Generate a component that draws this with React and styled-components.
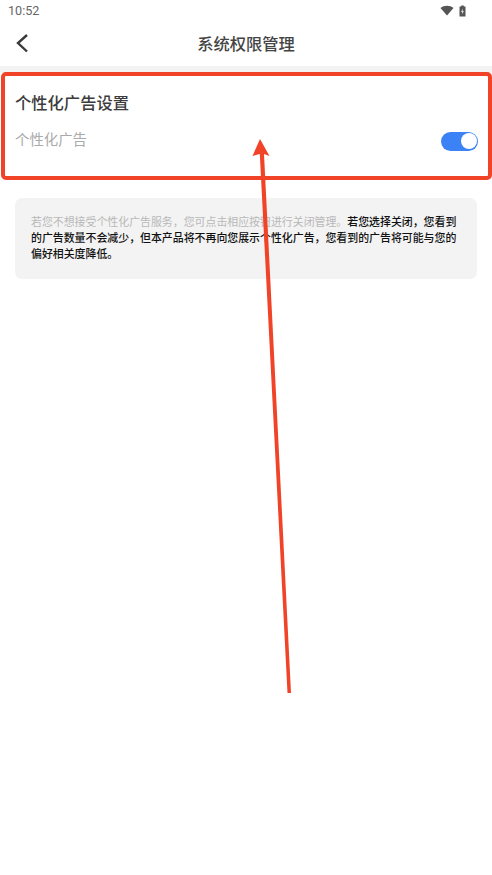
import React from 'react';
import styled, { createGlobalStyle } from 'styled-components';

const GlobalStyle = createGlobalStyle`
    html, body {
        margin: 0;
        padding: 0;
        background: #fff;
        font-family: "Roboto", "Noto Sans CJK SC", sans-serif;
    }
`

const Page = styled.div`
    position: relative;
    width: 492px;
    height: 875px;
    overflow: hidden;
    background: #fff;
`

const StatusBar = styled.div`
    height: 24px;
    box-sizing: border-box;
    padding: 0 26px 3px 8px;
    display: flex;
    align-items: center;
    justify-content: space-between;
    font-size: 12.6px;
    color: #666;
`

const StatusIcons = styled.div`
    display: flex;
    align-items: center;
    gap: 5px;
`

const NavBar = styled.div`
    position: relative;
    height: 42px;
    box-sizing: border-box;
    padding-bottom: 4px;
    display: flex;
    align-items: center;
    justify-content: center;
`

const BackButton = styled.svg`
    position: absolute;
    left: 14px;
    top: 8px;
`

const NavTitle = styled.div`
    font-size: 16.3px;
    font-weight: 500;
    color: #444;
`

const Band = styled.div`
    height: 7px;
    background: #f3f3f3;
`

const Section = styled.div`
    padding: 20px 14px 0 15px;
    height: 108px;
    box-sizing: border-box;
    margin-bottom: 17px;
`

const SectionTitle = styled.div`
    font-size: 16.3px;
    line-height: 22px;
    font-weight: 500;
    color: #3c3c3c;
`

const Row = styled.div`
    margin-top: 16px;
    display: flex;
    align-items: center;
    justify-content: space-between;
`

const RowLabel = styled.div`
    font-size: 14.4px;
    line-height: 20px;
    color: #aaa;
`

const Switch = styled.div`
    width: 37px;
    height: 19px;
    box-sizing: border-box;
    border-radius: 10px;
    background: #3b82f6;
    display: flex;
    justify-content: flex-end;
    align-items: center;
    padding-right: 1.5px;
`

const Knob = styled.div`
    width: 16px;
    height: 16px;
    border-radius: 50%;
    background: #fff;
`

const NoteBox = styled.div`
    margin: 0 15px;
    padding: 17px 16px;
    height: 81px;
    box-sizing: border-box;
    border-radius: 7px;
    background: #f3f3f3;
    font-size: 10.92px;
    line-height: 16px;
    font-weight: 500;
    color: #111;
`

const Muted = styled.span`
    font-weight: 400;
    color: #b8b8b8;
`

const RedFrame = styled.div`
    position: absolute;
    left: 1px;
    top: 72px;
    width: 491px;
    height: 108px;
    box-sizing: border-box;
    border: 4px solid #f04328;
    border-radius: 5px;
`

const ArrowLayer = styled.svg`
    position: absolute;
    left: 0;
    top: 0;
    pointer-events: none;
`

export default function App() {
    return (
        <Page>
            <GlobalStyle />
            <StatusBar>
                <span>10:52</span>
                <StatusIcons>
                    <svg width="14" height="11" viewBox="0 0 14 11">
                        <path d="M0.5 3 C4 0 10 0 13.5 3 L7 10.5 Z" fill="#555" />
                    </svg>
                    <svg width="7" height="12" viewBox="0 0 7 12">
                        <path d="M2.2 0.5 H4.8 V1.5 H6.5 V11.5 H0.5 V1.5 H2.2 Z" fill="#555" />
                        <path d="M3.8 3.5 L2 7 H3.2 L2.9 9.5 L5 6 H3.7 Z" fill="#ddd" />
                    </svg>
                </StatusIcons>
            </StatusBar>
            <NavBar>
                <BackButton width="16" height="22" viewBox="0 0 16 22">
                    <path d="M13 3 L4 11 L13 19.5" fill="none" stroke="#3a3a3a" strokeWidth="2.4" />
                </BackButton>
                <NavTitle>系统权限管理</NavTitle>
            </NavBar>
            <Band />
            <Section>
                <SectionTitle>个性化广告设置</SectionTitle>
                <Row>
                    <RowLabel>个性化广告</RowLabel>
                    <Switch><Knob /></Switch>
                </Row>
            </Section>
            <NoteBox>
                <Muted>若您不想接受个性化广告服务，您可点击相应按钮进行关闭管理。</Muted>
                若您选择关闭，您看到的广告数量不会减少，但本产品将不再向您展示个性化广告，您看到的广告将可能与您的偏好相关度降低。
            </NoteBox>
            <RedFrame />
            <ArrowLayer width="492" height="875" viewBox="0 0 492 875">
                <path d="M260 139 L269.5 156 L264 154 L291 693 L287.5 693 L259.8 154 L252.5 156 Z" fill="#f04328" />
            </ArrowLayer>
        </Page>
    )
}
